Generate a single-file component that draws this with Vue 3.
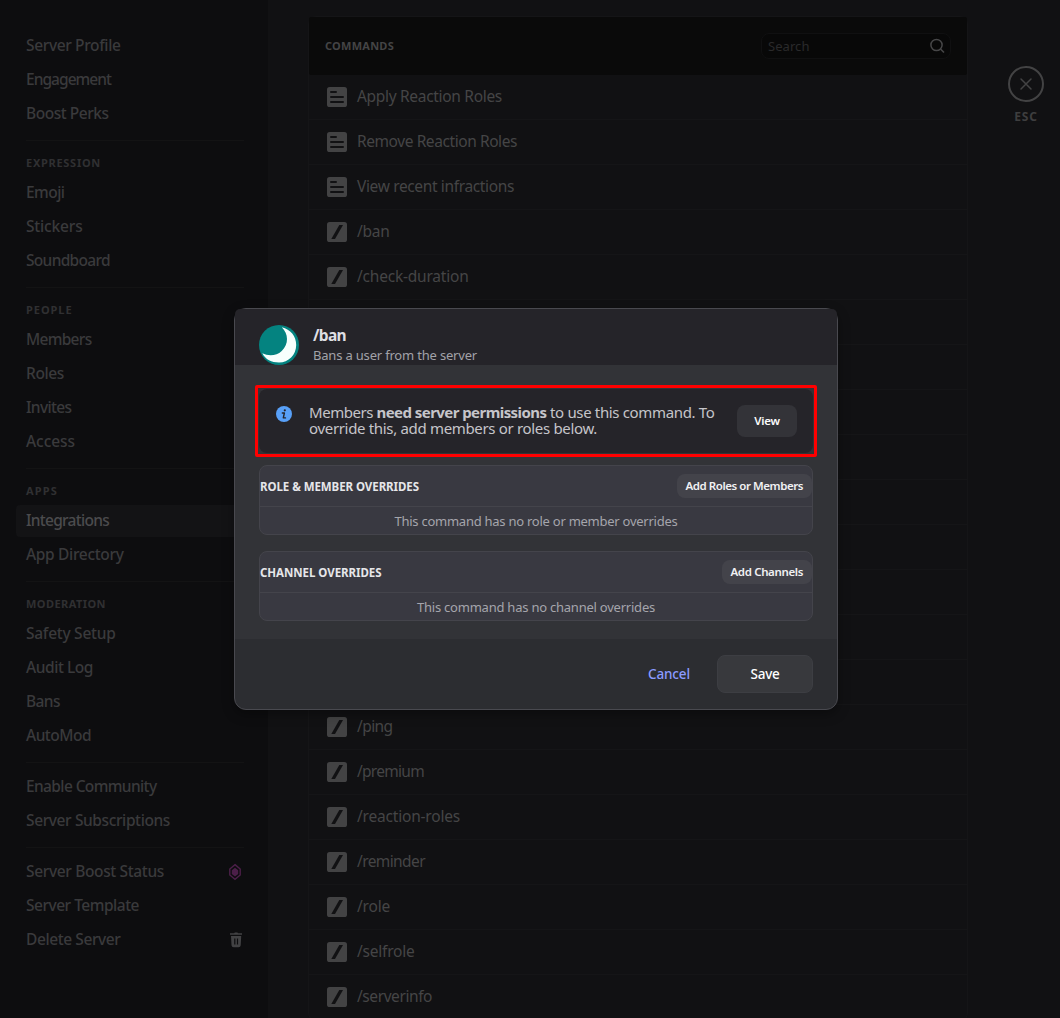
<script setup>
const groups = [
  { items: [['Server Profile', 94.5], ['Engagement', 85], ['Boost Perks', 82.5]] },
  { title: ['EXPRESSION', 75], items: [['Emoji', 38.5], ['Stickers', 56.5], ['Soundboard', 84]] },
  { title: ['PEOPLE', 46.5], items: [['Members', 65.5], ['Roles', 38], ['Invites', 45.5], ['Access', 49]] },
  { title: ['APPS', 32], items: [['Integrations', 83], ['App Directory', 97.5]] },
  { title: ['MODERATION', 80], items: [['Safety Setup', 89.5], ['Audit Log', 67], ['Bans', 34], ['AutoMod', 65]] },
  { items: [['Enable Community', 130.5], ['Server Subscriptions', 144]] },
  { items: [['Server Boost Status', 138], ['Server Template', 113], ['Delete Server', 94.5]] },
]

const commands = [
  ['Apply Reaction Roles', 145], ['Remove Reaction Roles', 160], ['View recent infractions', 157],
  ['/ban', 32.5], ['/check-duration', 111.5],
  ...Array.from({ length: 9 }, () => null),
  ['/ping', 35.5], ['/premium', 67], ['/reaction-roles', 103], ['/reminder', 68],
  ['/role', 33], ['/selfrole', 57.5], ['/serverinfo', 75],
]

// Tracks a label so that it occupies the given width in pixels.
const vFit = {
  mounted(el, { value }) {
    const natural = el.getBoundingClientRect().width
    el.style.letterSpacing = `${(value - natural) / el.textContent.length}px`
  },
}
</script>

<template>
  <div class="app">
    <nav class="sidebar">
      <template v-for="(group, i) in groups" :key="i">
        <div v-if="i" class="divider"></div>
        <div v-if="group.title" class="title"><span v-fit="group.title[1]">{{ group.title[0] }}</span></div>
        <div v-for="item in group.items" :key="item[0]" class="item" :class="{ active: item[0] === 'Integrations' }">
          <span v-fit="item[1]">{{ item[0] }}</span>
          <svg v-if="item[0] === 'Server Boost Status'" class="boost" width="14" height="18" viewBox="0 0 14 18">
            <path d="M7 1.600 12.200 6v6L7 16.400 1.800 12V6z" fill="none" stroke="#4c1f49" stroke-width="1.400" />
            <path d="M7 4.800 10.200 7.200v3.800L7 13.400l-3.200-2.400V7.200z" fill="#4c1f49" />
          </svg>
          <svg v-if="item[0] === 'Delete Server'" class="trash" width="12" height="16" viewBox="0 0 12 16">
            <path d="M4.200 1.200 4.800.400h2.600l.600.800h4v1.600H0V1.200z" fill="#424244" />
            <path fill-rule="evenodd" d="M1 4h10.200l-.500 9.200q-.200 2-2.200 2H3.700q-2 0-2.200-2zM4.200 6.500v6h1.200v-6zM6.900 6.500v6h1.200v-6z" fill="#424244" />
          </svg>
        </div>
      </template>
    </nav>

    <main class="content">
      <section class="table">
        <header class="table-head">
          <span v-fit="69">COMMANDS</span>
          <div class="search">
            <span v-fit="41.5">Search</span>
            <svg width="16" height="16" viewBox="0 0 16 16" fill="none" stroke="#474748" stroke-width="1.500">
              <circle cx="7.500" cy="7" r="5.600" />
              <path d="m11.500 11 3.500 3.600" />
            </svg>
          </div>
        </header>
        <div v-for="(command, i) in commands" :key="i" class="row">
          <template v-if="command">
            <svg width="20" height="20" viewBox="0 0 20 20">
              <rect width="20" height="20" rx="2.600" fill="#434344" />
              <path v-if="i < 3" d="M4 5h5M4 10h12M4 15h12" stroke="#111113" stroke-width="2" stroke-linecap="round" />
              <path v-else d="M12.300 3h3.700L8 17H4.300z" fill="#111113" />
            </svg>
            <span v-fit="command[1]">{{ command[0] }}</span>
          </template>
        </div>
      </section>
      <div class="close">
        <svg width="36" height="36" viewBox="0 0 36 36" fill="none" stroke="#434344">
          <circle cx="18" cy="18" r="17" stroke-width="2" />
          <path d="m13 13 10 10M23 13 13 23" stroke-width="1.500" stroke-linecap="round" />
        </svg>
        <span v-fit="23.5">ESC</span>
      </div>
    </main>

    <div class="modal">
      <header class="modal-head">
        <svg width="40" height="40" viewBox="0 0 40 40">
          <circle cx="20" cy="20" r="20" fill="#048380" />
          <path d="M22.800 2.300C31.500 4.500 37.200 11 37.200 20 37.200 30 29.500 37.500 20 37.500 12.500 37.500 6.500 34.500 3.300 28.300 9.500 31.300 17.500 31 22.700 26 30 19 29.500 9 22.800 2.300z" fill="#f7fffd" />
        </svg>
        <div class="names">
          <strong><span v-fit="33">/ban</span></strong>
          <span v-fit="164">Bans a user from the server</span>
        </div>
      </header>

      <div class="modal-body">
        <div class="notice">
          <svg class="info" width="16" height="16" viewBox="0 0 16 16">
            <circle cx="8" cy="8" r="8" fill="#58a0f8" />
            <circle cx="8.800" cy="4.300" r="1.100" fill="#252429" />
            <path d="M6.300 7h2.100L7.300 11.900h2.200" fill="none" stroke="#252429" stroke-width="1.400" stroke-linecap="round" stroke-linejoin="round" />
          </svg>
          <p>
            <span v-fit="67.5">Members </span><b v-fit="170">need server permissions</b><span v-fit="168"> to use this command. To</span><br>
            <span v-fit="288">override this, add members or roles below.</span>
          </p>
          <button class="view"><span v-fit="25.5">View</span></button>
          <div class="highlight"></div>
        </div>

        <section class="overrides">
          <header>
            <span v-fit="159">ROLE &amp; MEMBER OVERRIDES</span>
            <button><span v-fit="117.5">Add Roles or Members</span></button>
          </header>
          <div class="empty"><span v-fit="283">This command has no role or member overrides</span></div>
        </section>
        <section class="overrides">
          <header>
            <span v-fit="121.5">CHANNEL OVERRIDES</span>
            <button><span v-fit="72.5">Add Channels</span></button>
          </header>
          <div class="empty"><span v-fit="238">This command has no channel overrides</span></div>
        </section>
      </div>

      <footer class="modal-foot">
        <button class="cancel"><span v-fit="42">Cancel</span></button>
        <button class="save"><span v-fit="29">Save</span></button>
      </footer>
    </div>
  </div>
</template>

<style>
body { background: #111113; overflow: hidden; }
</style>

<style scoped>
* { box-sizing: border-box; }
.app {
  position: relative;
  display: flex;
  height: 1018px;
  overflow: hidden;
  background: #111113;
  font-family: "Noto Sans", sans-serif;
  font-size: 15.5px;
}
span, b { white-space: pre; }
svg { flex: none; display: block; }
button { border: 0; padding: 0; font: inherit; color: inherit; }

.sidebar {
  display: flex;
  flex-direction: column;
  width: 268px;
  flex: none;
  padding: 30px 16px 0;
  background: #0d0d0f;
}
.divider { flex: none; height: 1px; margin: 8px 8px 8px 10px; background: #131314; }
.title {
  flex: none;
  height: 28px;
  padding-left: 10px;
  line-height: 28px;
  font-size: 11px;
  font-weight: 700;
  color: #303032;
}
.item {
  display: flex;
  flex: none;
  align-items: center;
  justify-content: space-between;
  height: 32px;
  margin-bottom: 2px;
  padding: 0 10px;
  border-radius: 4px;
  font-weight: 500;
  color: #3a3a3c;
}
.item span { margin-top: -2px; }
.item.active { background: #131315; color: #4b4b4d; }

.content { display: flex; flex: 1; align-items: flex-start; }
.table {
  width: 660px;
  margin: 16px 0 0 40px;
  border: 1px solid #151517;
  border-radius: 8px;
}
.table-head {
  display: flex;
  align-items: center;
  justify-content: space-between;
  height: 58px;
  padding: 0 16px;
  border-radius: 2px;
  background: #0a0a0a;
  font-size: 11px;
  font-weight: 700;
  color: #444445;
}
.table-head > span { margin-top: -1px; }
.search {
  display: flex;
  align-items: center;
  justify-content: space-between;
  width: 190px;
  height: 26px;
  padding: 0 5px 0 6px;
  border: 1px solid #101011;
  border-radius: 8px;
  background: #080808;
  font-size: 13px;
  font-weight: 400;
  color: #2a2a2b;
}
.row {
  display: flex;
  align-items: center;
  gap: 10px;
  height: 45px;
  padding: 0 18px;
  border-bottom: 1px solid #151517;
  color: #454546;
}
.row span { margin-top: -2px; }
.close {
  display: flex;
  flex-direction: column;
  align-items: center;
  width: 36px;
  margin: 66px 0 0 40px;
  font-size: 12px;
  line-height: 16px;
  font-weight: 700;
  color: #3e3e3f;
}
.close span { margin-top: 7px; }

.modal {
  position: absolute;
  left: 234px;
  top: 308px;
  width: 604px;
  height: 402px;
  border: 1px solid #49494f;
  border-radius: 12px;
  background: #2c2d31;
  box-shadow: 0 4px 12px rgba(0, 0, 0, .35);
}
.modal-head {
  display: flex;
  gap: 14px;
  height: 56px;
  padding: 16px 24px 0;
  border-radius: 5px 5px 0 0;
  background: #252429;
}
.names { display: flex; flex-direction: column; padding-top: 1px; font-size: 13px; line-height: 18px; color: #a2a2a8; }
.names strong { height: 20px; font-size: 15.5px; line-height: 19px; color: #dfdfe3; }
.modal-body { height: 274px; padding: 24px 24px 0; background: #323337; }
.notice {
  position: relative;
  display: flex;
  height: 64px;
  margin-bottom: 12px;
  border-radius: 8px;
  background: #252429;
}
.info { margin: 17px 0 0 17px; }
.notice p { width: 428px; margin: 15px 0 0 17px; font-size: 15px; line-height: 16px; color: #c5c5ca; }
.view {
  width: 60px;
  height: 32px;
  margin-top: 16px;
  padding-bottom: 1px;
  border-radius: 8px;
  background: #333338;
  font-size: 11.5px;
  font-weight: 600;
  color: #fbfbfb;
}
.highlight { position: absolute; inset: -4px; border: 3px solid #f00; border-radius: 2px; }
.overrides { height: 70px; margin-bottom: 16px; border: 1px solid #44444b; border-radius: 8px; background: #393941; }
.overrides header {
  display: flex;
  align-items: center;
  justify-content: space-between;
  height: 41px;
  border-bottom: 1px solid #44444b;
  font-size: 11.5px;
  font-weight: 700;
  color: #e6e6e9;
}
.overrides button {
  height: 24px;
  padding: 0 9px 1px;
  border-radius: 8px;
  background: #43434a;
  font-size: 11.5px;
  font-weight: 600;
  color: #f1f1f3;
}
.empty { text-align: center; font-size: 13px; line-height: 28px; color: #a5a5ac; }
.modal-foot { display: flex; justify-content: flex-end; gap: 27px; padding: 16px 24px; font-size: 13.5px; font-weight: 500; }
.cancel { background: none; color: #8b9bff; }
.save { width: 96px; height: 38px; border: 1px solid #3d3e43; border-radius: 8px; background: #38393d; color: #fff; }
</style>
